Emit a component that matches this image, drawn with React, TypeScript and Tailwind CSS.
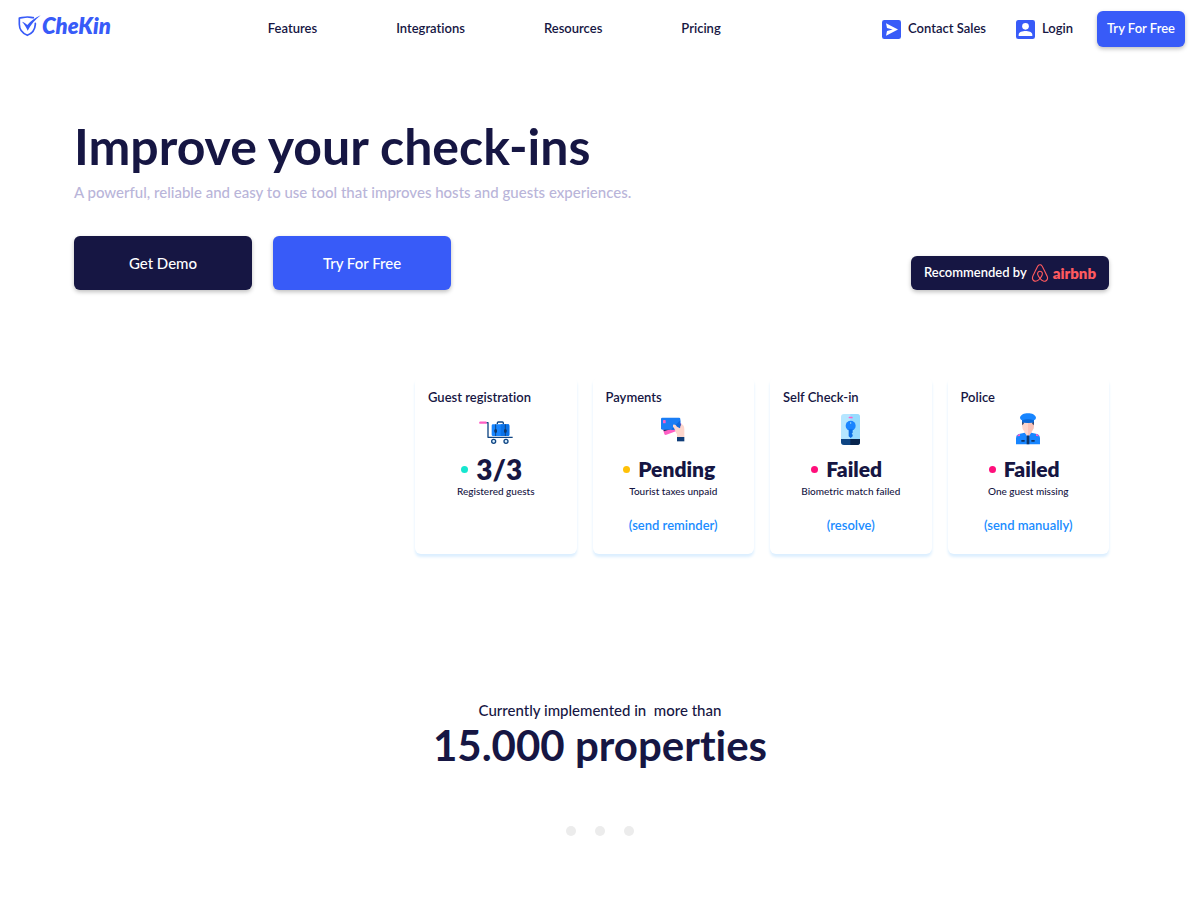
import type { ReactNode } from "react";
import { FaAirbnb } from "react-icons/fa";

function ShieldLogo() {
  return (
    <svg viewBox="0 0 69 66" className="h-[22px] w-[23px]" fill="none" aria-hidden="true">
      <path
        d="M46 8C41 8 35 6 28 6C20 6 12 8 4 9V28C4 44 13 55 28 61C43 55 51 44 52 28V25"
        stroke="#385bf8"
        strokeWidth="5"
        strokeLinecap="round"
        strokeLinejoin="round"
      />
      <path d="M12 20C18 22 23 25 28 30C39 18 51 8 68 1C51 14 39 29 29 47C25 37 19 28 12 20Z" fill="#385bf8" />
    </svg>
  );
}

function SendIcon() {
  return (
    <svg viewBox="0 0 57 57" className="size-[19px]" aria-hidden="true">
      <rect width="57" height="57" rx="7" fill="#385bf8" />
      <path d="M12 10L48 28.500L12 47L15 33L32 28.500L15 24Z" fill="#fff" />
    </svg>
  );
}

function UserIcon() {
  return (
    <svg viewBox="0 0 57 57" className="size-[19px]" aria-hidden="true">
      <rect width="57" height="57" rx="7" fill="#385bf8" />
      <circle cx="28.500" cy="19" r="10" fill="#fff" />
      <path d="M8 48V44C8 36 20 33 28.500 33S49 36 49 44V48Z" fill="#fff" />
    </svg>
  );
}

function TrolleyIcon() {
  return (
    <svg viewBox="0 0 102 75" className="h-[25px] w-[34px] self-end" fill="none" aria-hidden="true">
      <path d="M20 8H27V52H101" stroke="#0f4583" strokeWidth="4" strokeLinejoin="round" />
      <path d="M4 8H20" stroke="#ff5fc4" strokeWidth="7" strokeLinecap="round" />
      <path d="M55 13V9Q55 6 58 6H70Q73 6 73 9V13" stroke="#0f4583" strokeWidth="4" />
      <rect x="38" y="13" width="53" height="35" rx="4" fill="#1785ff" />
      <path d="M65 13H87Q91 13 91 17V44Q91 48 87 48H65Z" fill="#0a72e8" />
      <path d="M50 13V48M79 13V48" stroke="#0f4583" strokeWidth="3" />
      <rect x="46" y="28" width="8" height="10" rx="3" fill="#0f3566" />
      <rect x="75" y="28" width="8" height="10" rx="3" fill="#0f3566" />
      <circle cx="44" cy="64" r="6" stroke="#0f4583" strokeWidth="4" fill="#d9f0ff" />
      <circle cx="81" cy="64" r="6" stroke="#0f4583" strokeWidth="4" fill="#d9f0ff" />
    </svg>
  );
}

function CardIcon() {
  return (
    <svg viewBox="0 0 72 75" className="h-[25px] w-[24px]" aria-hidden="true">
      <path d="M6 37L60 18L65 35L14 54Q11 54 10 51Z" fill="#ff5fc4" />
      <path d="M7 38L58 20L61 26L9 43Z" fill="#12305c" />
      <rect x="0" y="2" width="58" height="36" rx="4" fill="#1a7df5" />
      <path d="M30 38L58 10V34Q58 38 54 38Z" fill="#0c68df" />
      <rect x="6" y="9" width="8" height="10" rx="2" fill="#ff5fc4" />
      <path d="M36 24C40 21 44 24 48 29L57 34L60 22C66 22 70 28 70 36V60H48V52C43 46 43 37 36 29Z" fill="#fdd6cc" />
      <rect x="48" y="60" width="22" height="13" fill="#0f3c78" />
    </svg>
  );
}

function PhoneKeyIcon() {
  return (
    <svg viewBox="0 0 57 93" className="h-[31px] w-[19px]" aria-hidden="true">
      <rect width="57" height="93" rx="9" fill="#b5e6ff" />
      <path d="M28 0H48Q57 0 57 9V76H28Z" fill="#97dbff" />
      <path d="M0 75H57V84Q57 93 48 93H9Q0 93 0 84Z" fill="#0f4583" />
      <path d="M28 75H57V84Q57 93 48 93H28Z" fill="#08254d" />
      <rect x="23" y="8" width="12" height="5" rx="2" fill="#ff5fc4" />
      <circle cx="29" cy="35" r="15" fill="#1a85ff" />
      <path d="M23 46H35V56L32 59L35 62V67L29 72L23 67Z" fill="#0d6fe5" />
      <circle cx="29" cy="27" r="2" fill="#b5e6ff" />
    </svg>
  );
}

function OfficerIcon() {
  return (
    <svg viewBox="0 0 72 96" className="h-[32px] w-[24px]" aria-hidden="true">
      <path d="M18 24H54V38Q54 49 46 57V66L36 76L26 66V57Q18 49 18 38Z" fill="#fdd6cc" />
      <path d="M36 24H54V38Q54 49 46 57V66L36 76Z" fill="#f9c3b8" />
      <path d="M18 24H23V32L19 37ZM54 24H49V32L53 37Z" fill="#12305c" />
      <path d="M12 14C14 5 24 1 36 1S58 5 60 14Q60 19 54 22V27Q36 32 18 27V22Q12 19 12 14Z" fill="#1785ff" />
      <path d="M18 22Q36 16 54 22V28Q36 32 18 28Z" fill="#0b68d6" />
      <path d="M0 94V76Q0 64 12 62L26 59L36 73L46 59L60 62Q72 64 72 76V94Z" fill="#1785ff" />
      <path d="M32 70L36 66L40 70V94H32Z" fill="#0f3566" />
      <path d="M3 70Q6 63 12 63V69ZM69 70Q66 63 60 63V69Z" fill="#ff5fc4" />
      <path d="M16 81H26V86H16ZM46 81H56V86H46Z" fill="#0f3566" />
    </svg>
  );
}

type Status = {
  title: string;
  icon: ReactNode;
  dot: string;
  value: string;
  valueSize: string;
  detail: string;
  action?: string;
};

const statuses: Status[] = [
  {
    title: "Guest registration",
    icon: <TrolleyIcon />,
    dot: "bg-[#16e6cf]",
    value: "3/3",
    valueSize: "text-[28px]",
    detail: "Registered guests",
  },
  {
    title: "Payments",
    icon: <CardIcon />,
    dot: "bg-[#ffc107]",
    value: "Pending",
    valueSize: "text-[21px]",
    detail: "Tourist taxes unpaid",
    action: "(send reminder)",
  },
  {
    title: "Self Check-in",
    icon: <PhoneKeyIcon />,
    dot: "bg-[#ff0f7b]",
    value: "Failed",
    valueSize: "text-[21px]",
    detail: "Biometric match failed",
    action: "(resolve)",
  },
  {
    title: "Police",
    icon: <OfficerIcon />,
    dot: "bg-[#ff0f7b]",
    value: "Failed",
    valueSize: "text-[21px]",
    detail: "One guest missing",
    action: "(send manually)",
  },
];

function StatusCard({ title, icon, dot, value, valueSize, detail, action }: Status) {
  return (
    <article className="rounded-md bg-white pt-2.5 pb-[19px] text-center shadow-[0_3px_3px_#dcefff]">
      <h2 className="px-[13px] text-left text-[13px] leading-5 font-semibold">{title}</h2>
      <div className="mt-1.5 flex h-8 items-center justify-center">{icon}</div>
      <p className="mt-2 flex h-8 items-center justify-center gap-2 pr-2 font-extrabold">
        <span className={`size-[7px] rounded-full ${dot}`} />
        <span className={`leading-8 ${valueSize}`}>{value}</span>
      </p>
      <p className="text-[10px] leading-3 font-medium">{detail}</p>
      {action && (
        <p className="mt-[18px] text-[13px] leading-5 font-semibold text-[#1a8cff]">
          <a href="#">{action}</a>
        </p>
      )}
    </article>
  );
}

export default function App() {
  return (
    <div className="min-h-screen bg-white font-['Lato',sans-serif] text-[#161643] [font-variant-ligatures:none]">
      <header className="flex h-[58px] items-center pr-[15px] pl-[18px] text-[13px] font-semibold">
        <a href="#" className="mb-1.5 flex items-center gap-px text-[#385bf8]">
          <ShieldLogo />
          <span className="text-[22px] leading-7 font-extrabold italic">CheKin</span>
        </a>
        <nav className="ml-[157px] flex gap-[79px]">
          <a href="#">Features</a>
          <a href="#">Integrations</a>
          <a href="#">Resources</a>
          <a href="#">Pricing</a>
        </nav>
        <div className="ml-auto flex items-center">
          <a href="#" className="flex items-center gap-[7px]">
            <SendIcon />
            Contact Sales
          </a>
          <a href="#" className="ml-[30px] flex items-center gap-[7px]">
            <UserIcon />
            Login
          </a>
          <button
            type="button"
            className="ml-6 h-9 w-[88px] rounded-md bg-[#385bf8] text-white shadow-[0_2px_4px_rgba(0,0,0,0.25)]"
          >
            Try For Free
          </button>
        </div>
      </header>

      <main>
        <section className="pt-[60px] pr-[91px] pl-[74px]">
          <h1 className="text-[50px] leading-[56px] font-bold">Improve your check-ins</h1>
          <p className="mt-1.5 text-[15px] leading-6 font-medium text-[#b9b5d9]">
            A powerful, reliable and easy to use tool that improves hosts and guests experiences.
          </p>
          <div className="mt-8 flex items-end justify-between">
            <div className="flex gap-[21px] text-[15px] font-medium text-white">
              <button
                type="button"
                className="h-[54px] w-[178px] rounded-md bg-[#161643] shadow-[0_2px_4px_rgba(0,0,0,0.25)]"
              >
                Get Demo
              </button>
              <button
                type="button"
                className="h-[54px] w-[178px] rounded-md bg-[#385bf8] shadow-[0_2px_4px_rgba(0,0,0,0.25)]"
              >
                Try For Free
              </button>
            </div>
            <p className="flex h-[34px] items-center rounded-md bg-[#161643] px-[13px] text-[13px] font-semibold text-white shadow-[0_2px_4px_rgba(0,0,0,0.25)]">
              Recommended by
              <FaAirbnb className="ml-[3px] size-5 text-[#ff5a5f]" aria-hidden="true" />
              <span className="ml-[3px] text-[15px] leading-5 font-extrabold text-[#ff5a5f]">airbnb</span>
            </p>
          </div>
          <div className="mt-[87px] ml-auto grid max-w-[694px] grid-cols-4 gap-4">
            {statuses.map((status) => (
              <StatusCard key={status.title} {...status} />
            ))}
          </div>
        </section>

        <section className="pt-[144px] pb-16 text-center">
          <p className="text-[15px] leading-6 font-medium">Currently implemented in&nbsp; more than</p>
          <p className="text-[42px] leading-[46px] font-bold">15.000 properties</p>
          <div className="mt-[58px] flex justify-center gap-[19px]">
            <span className="size-2.5 rounded-full bg-[#ececec]" />
            <span className="size-2.5 rounded-full bg-[#ececec]" />
            <span className="size-2.5 rounded-full bg-[#ececec]" />
          </div>
        </section>
      </main>
    </div>
  );
}
